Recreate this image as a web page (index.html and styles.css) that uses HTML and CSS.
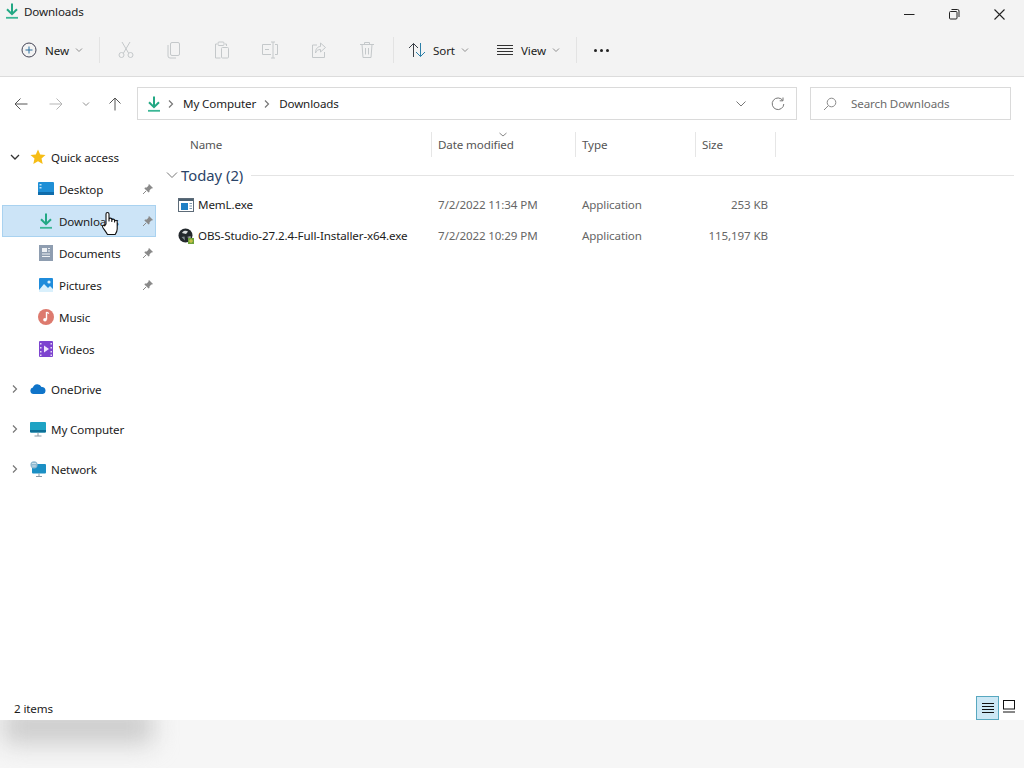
FILE: index.html
```html
<!DOCTYPE html>
<html lang="en">
<head>
<meta charset="utf-8">
<title>Downloads</title>
<link rel="stylesheet" href="styles.css">
</head>
<body>
<svg class="defs" width="0" height="0">
  <symbol id="dl" viewBox="0 0 16 16"><path d="M8 .5v10M3 6.200 8 11.200l5-5" fill="none" stroke="#22a884" stroke-width="2"/><path d="M2 14.800h12" stroke="#3ab795" stroke-width="1.800"/></symbol>
  <symbol id="pin" viewBox="0 0 12 12"><path d="M7 1l4 4-1 .6-.6-.2L7.600 7.200 7.400 9 6.600 9.600 2.400 5.400 3 4.600l1.800-.2L6.600 2.600 6.400 2z" fill="#8a8a8a"/><path d="M4 8l-3 3" stroke="#8a8a8a"/></symbol>
  <symbol id="chev" viewBox="0 0 8 8"><path d="M1 2.500l3 3 3-3" fill="none" stroke="#8f8f8f"/></symbol>
  <symbol id="right" viewBox="0 0 10 10"><path d="M3 1.500 6.500 5 3 8.500" fill="none" stroke="#777" stroke-width="1.200"/></symbol>
</svg>
<div class="app">
  <header class="chrome">
    <div class="titlebar">
      <div class="title">
        <svg width="16" height="16"><use href="#dl"/></svg>
        <span>Downloads</span>
      </div>
      <div class="winctl">
        <svg width="11" height="11" viewBox="0 0 11 11"><path d="M0 5.500h10.500" stroke="#222"/></svg>
        <svg width="11" height="11" viewBox="0 0 11 11"><rect x=".5" y="2.500" width="7.500" height="7.500" rx="1" fill="none" stroke="#222"/><path d="M2.500 .5h6a1.500 1.500 0 0 1 1.500 1.500v6" fill="none" stroke="#222"/></svg>
        <svg width="11" height="11" viewBox="0 0 11 11"><path d="M.5.500l10 10M10.500.500l-10 10" stroke="#222" stroke-width="1.100"/></svg>
      </div>
    </div>
    <div class="toolbar">
      <div class="tb-new">
        <svg width="16" height="16" viewBox="0 0 16 16"><circle cx="8" cy="8" r="7" fill="none" stroke="#445"/><path d="M8 4.500v7M4.500 8h7" stroke="#2b6f9e"/></svg>
        <span>New</span>
        <svg class="ch" width="8" height="8"><use href="#chev"/></svg>
      </div>
      <div class="sep"></div>
      <div class="tb-icons">
        <svg width="16" height="18" viewBox="0 0 16 18"><g fill="none" stroke="#c4c8ca"><path d="M4 1l6.500 11M12 1 5.500 12"/><circle cx="3.500" cy="14" r="2.500"/><circle cx="12.500" cy="14" r="2.500"/></g></svg>
        <svg width="16" height="18" viewBox="0 0 16 18"><g fill="none" stroke="#c4c8ca"><rect x="4.500" y="1.500" width="9" height="13" rx="1.500"/><path d="M2 4v11a2 2 0 0 0 2 2h6"/></g></svg>
        <svg width="16" height="18" viewBox="0 0 16 18"><g fill="none" stroke="#c4c8ca"><path d="M3 3H1.500v14h5M11 3h1.500v2"/><rect x="4" y="1" width="6" height="3.500" rx="1"/><rect x="7.500" y="6.500" width="7" height="10.500" rx="1"/></g></svg>
        <svg width="18" height="18" viewBox="0 0 18 18"><g fill="none" stroke="#c4c8ca"><path d="M10 3.500H1.500v10H10M14 3.500h2.500v10H14"/><path d="M12 1v16M10 1h4M10 17h4M4 8.500h4"/></g></svg>
        <svg width="16" height="18" viewBox="0 0 16 18"><g fill="none" stroke="#c4c8ca"><path d="M6 4H1.500v12.500h12V11"/><path d="M9.500 2l5 4.500-5 4.500V8.500C7 8.500 5.500 9.500 4.500 12c0-4 2-6.500 5-6.500z"/></g></svg>
        <svg width="16" height="18" viewBox="0 0 16 18"><g fill="none" stroke="#c4c8ca"><path d="M1 3.500h14M5.500 3.500V1.500h5v2M3 3.500l1 13h8l1-13M6.500 7v6.500M9.500 7v6.500"/></g></svg>
      </div>
      <div class="sep"></div>
      <div class="tb-btn tb-sort">
        <svg width="18" height="16" viewBox="0 0 18 16"><path d="M5.500 15V1.500M1 6l4.500-4.500L10 6" fill="none" stroke="#3a3f46"/><path d="M12.500 1v13.500M8 10l4.500 4.500L17 10" fill="none" stroke="#2b7fa8"/></svg>
        <span>Sort</span>
        <svg class="ch" width="8" height="8"><use href="#chev"/></svg>
      </div>
      <div class="tb-btn tb-view">
        <svg width="16" height="12" viewBox="0 0 16 12"><path d="M0 1.500h16M0 4.500h16M0 7.500h16M0 10.500h16" stroke="#333"/></svg>
        <span>View</span>
        <svg class="ch" width="8" height="8"><use href="#chev"/></svg>
      </div>
      <div class="sep"></div>
      <div class="dots"><i></i><i></i><i></i></div>
    </div>
  </header>

  <nav class="addrrow">
    <div class="navs">
      <svg class="n-back" width="14" height="14" viewBox="0 0 14 14"><path d="M13.500 7H1M6.500 1.500 1 7l5.500 5.500" fill="none" stroke="#555"/></svg>
      <svg class="n-fwd" width="14" height="14" viewBox="0 0 14 14"><path d="M.5 7H13M7.500 1.500 13 7l-5.500 5.500" fill="none" stroke="#b5b5b5"/></svg>
      <svg class="n-down" width="8" height="8"><use href="#chev"/></svg>
      <svg class="n-up" width="14" height="14" viewBox="0 0 14 14"><path d="M7 13.500V1M1.500 6.500 7 1l5.500 5.500" fill="none" stroke="#555"/></svg>
    </div>
    <div class="addr">
      <svg width="16" height="16"><use href="#dl"/></svg>
      <svg class="crumb-ch" width="10" height="10"><use href="#right"/></svg>
      <span>My Computer</span>
      <svg class="crumb-ch2" width="10" height="10"><use href="#right"/></svg>
      <span>Downloads</span>
      <svg class="addr-down" width="12" height="8" viewBox="0 0 12 8"><path d="M1.500 1.500 6 6l4.500-4.500" fill="none" stroke="#777"/></svg>
      <svg class="addr-ref" width="14" height="14" viewBox="0 0 14 14"><path d="M11.800 3.500A5.800 5.800 0 1 0 12.800 7" fill="none" stroke="#777"/><path d="M12 .5v3.300H8.700" fill="none" stroke="#777"/></svg>
    </div>
    <div class="search">
      <svg width="14" height="14" viewBox="0 0 14 14"><circle cx="8.500" cy="5.500" r="4.300" fill="none" stroke="#8a8a8a"/><path d="M5.300 8.700 1 13" stroke="#8a8a8a"/></svg>
      <span>Search Downloads</span>
    </div>
  </nav>

  <div class="body">
    <aside class="side">
      <div class="row top">
        <svg class="exp" width="10" height="10" viewBox="0 0 10 10"><path d="M1 3l4 4 4-4" fill="none" stroke="#333" stroke-width="1.300"/></svg>
        <svg class="ic" width="16" height="16" viewBox="0 0 16 16"><path d="M8 .5l2.200 5 5.300.5-4 3.600 1.200 5.400L8 12.300 3.300 15l1.200-5.400-4-3.600 5.300-.5z" fill="#f6bd16"/></svg>
        <span>Quick access</span>
      </div>
      <div class="row sub">
        <svg class="ic" width="16" height="14" viewBox="0 0 16 14"><rect width="16" height="13" rx="1" fill="#1f8fd6"/><rect y="10" width="16" height="3" fill="#0f6cab"/><path d="M1.500 2h2v1.500h-2zM1.500 5h2v1.500h-2z" fill="#bfe6fb"/></svg>
        <span class="lbl">Desktop</span>
        <svg class="pin" width="12" height="12"><use href="#pin"/></svg>
      </div>
      <div class="row sub sel">
        <svg class="ic" width="16" height="16"><use href="#dl"/></svg>
        <span class="lbl">Downloads</span>
        <svg class="pin" width="12" height="12"><use href="#pin"/></svg>
      </div>
      <div class="row sub">
        <svg class="ic" width="14" height="16" viewBox="0 0 14 16"><rect width="14" height="16" fill="#8e9db0"/><rect x="3" y="3" width="5" height="4" fill="#eef1f4"/><path d="M9 3.500h2M9 6h2M3 9h8M3 11.500h8" stroke="#eef1f4"/></svg>
        <span class="lbl">Documents</span>
        <svg class="pin" width="12" height="12"><use href="#pin"/></svg>
      </div>
      <div class="row sub">
        <svg class="ic" width="14" height="14" viewBox="0 0 14 14"><rect width="14" height="14" rx="1" fill="#1f8cdb"/><path d="M0 12l5-6 4 4 2-2 3 3v3H0z" fill="#d9f0fc"/><circle cx="10" cy="4" r="1.600" fill="#d9f0fc"/></svg>
        <span class="lbl">Pictures</span>
        <svg class="pin" width="12" height="12"><use href="#pin"/></svg>
      </div>
      <div class="row sub">
        <svg class="ic" width="16" height="16" viewBox="0 0 16 16"><circle cx="8" cy="8" r="8" fill="#dd7a6e"/><path d="M8.500 3v7.500" stroke="#fff" stroke-width="1.400"/><circle cx="7" cy="10.800" r="1.800" fill="#fff"/><path d="M8.500 3l2.500 1.500" stroke="#fff" stroke-width="1.200"/></svg>
        <span class="lbl">Music</span>
      </div>
      <div class="row sub">
        <svg class="ic" width="14" height="16" viewBox="0 0 14 16"><rect width="14" height="16" rx="1" fill="#7d44cf"/><path d="M1 2h1.500v1.500H1zM1 6h1.500v1.500H1zM1 10h1.500v1.500H1zM1 13.500h1.500V15H1zM11.500 2H13v1.500h-1.500zM11.500 6H13v1.500h-1.500zM11.500 10H13v1.500h-1.500zM11.500 13.500H13V15h-1.500z" fill="#e4d6f7"/><path d="M5 4.500 10 8l-5 3.500z" fill="#efe6fb"/></svg>
        <span class="lbl">Videos</span>
      </div>
      <div class="row top gap">
        <svg class="exp" width="10" height="10"><use href="#right"/></svg>
        <svg class="ic" width="16" height="10" viewBox="0 0 16 10"><path d="M3.500 10a3.300 3.300 0 0 1-.6-6.500A4.600 4.600 0 0 1 11.500 3 3.600 3.600 0 0 1 13 10z" fill="#0f74c9"/></svg>
        <span>OneDrive</span>
      </div>
      <div class="row top gap">
        <svg class="exp" width="10" height="10"><use href="#right"/></svg>
        <svg class="ic" width="16" height="15" viewBox="0 0 16 15"><rect width="16" height="10.500" rx="1" fill="#1ea3c4"/><path d="M0 8h16v1.500a1 1 0 0 1-1 1H1a1 1 0 0 1-1-1z" fill="#0d6f96"/><path d="M8 10.500V14M4.500 14h7" stroke="#8a9aa5"/></svg>
        <span>My Computer</span>
      </div>
      <div class="row top gap">
        <svg class="exp" width="10" height="10"><use href="#right"/></svg>
        <svg class="ic" width="16" height="16" viewBox="0 0 16 16"><rect x="2" y="3" width="14" height="9.500" rx="1" fill="#1b8fc4"/><circle cx="4" cy="3.800" r="3.600" fill="#8fb8cf"/><path d="M2 2.500h4M2.200 5h3.600" stroke="#e8f2f7" stroke-width=".7"/><path d="M9 12.500V15.500M6 15.500h6" stroke="#8a9aa5"/></svg>
        <span>Network</span>
      </div>
    </aside>

    <main class="list">
      <div class="cols">
        <div class="col c-name">Name</div>
        <div class="col c-date">Date modified<svg class="sortmark" width="8" height="5" viewBox="0 0 8 5"><path d="M.5 1 4 4l3.500-3" fill="none" stroke="#888"/></svg></div>
        <div class="col c-type">Type</div>
        <div class="col c-size">Size</div>
      </div>
      <div class="group">
        <svg width="12" height="8" viewBox="0 0 12 8"><path d="M1 1.500 6 6.500l5-5" fill="none" stroke="#777"/></svg>
        <span>Today (2)</span>
        <div class="rule"></div>
      </div>
      <div class="file">
        <div class="fname">
          <svg width="16" height="14" viewBox="0 0 16 14"><rect x=".5" y=".5" width="15" height="13" fill="#fff" stroke="#5d6b78"/><rect x="1" y="1" width="14" height="2" fill="#4d6272"/><rect x="3" y="5" width="7" height="7" fill="#1f7fc4"/><path d="M11.500 5.500H14M11.500 8H14M11.500 10.500H14" stroke="#7d98ad"/></svg>
          <span>MemL.exe</span>
        </div>
        <div>7/2/2022 11:34 PM</div>
        <div>Application</div>
        <div class="fsize">253 KB</div>
      </div>
      <div class="file">
        <div class="fname">
          <svg width="16" height="16" viewBox="0 0 16 16"><circle cx="7.500" cy="7.500" r="7" fill="#23282c"/><path d="M4 5a4 4 0 0 1 6-1.500L8 6z" fill="#d8dcdc"/><path d="M3.500 9l3-.5.500 4z" fill="#7f8a8c"/><path d="M9 9l3.500-1 .5 3z" fill="#9a9f9f"/><rect x="10" y="10" width="6" height="6" fill="#6ea23a"/><path d="M11 13h4M13 11v4" stroke="#e3c94a"/></svg>
          <span>OBS-Studio-27.2.4-Full-Installer-x64.exe</span>
        </div>
        <div>7/2/2022 10:29 PM</div>
        <div>Application</div>
        <div class="fsize">115,197 KB</div>
      </div>
    </main>
  </div>

  <div class="status">
    <span>2 items</span>
    <div class="views">
      <div class="v-on"><svg width="12" height="10" viewBox="0 0 12 10"><path d="M0 .5h12M0 3.500h12M0 6.500h12M0 9.500h12" stroke="#111"/></svg></div>
      <svg class="v-off" width="12" height="13" viewBox="0 0 12 13"><rect x=".5" y=".5" width="11" height="8.500" fill="none" stroke="#111"/><path d="M0 12h12" stroke="#111"/></svg>
    </div>
  </div>
  <div class="under"><div class="shade"></div></div>

  <svg class="hand" width="18" height="26" viewBox="0 0 18 26"><path d="M5 13V3a1.500 1.500 0 0 1 3 0v7-1.500a1.400 1.400 0 0 1 2.800 0V10.500 9.500a1.400 1.400 0 0 1 2.800 0v1.500-.5a1.300 1.300 0 0 1 2.600 0V18c0 2.500-1 4-2 5.500H6.500C5 21 3.500 19 1.800 16.500c-1-1.500.8-3 2-1.700z" fill="#fff" stroke="#111" stroke-width="1.100" stroke-linejoin="round"/></svg>
</div>
</body>
</html>
```
FILE: styles.css
```css
* { box-sizing: border-box; }
html, body { margin: 0; height: 100%; }
body { font-family: "Noto Sans", "Liberation Sans", sans-serif; font-size: 11.6px; letter-spacing: -0.12px; color: #1c1c1c; background: #fff; overflow: hidden; }
.defs { position: absolute; }
.app { position: relative; width: 1024px; height: 768px; display: flex; flex-direction: column; }

.chrome { height: 77px; background: #f3f3f3; border-bottom: 1px solid #dcdcdc; }
.titlebar { height: 28px; display: flex; justify-content: space-between; }
.title { display: flex; align-items: center; gap: 4px; padding: 0 0 6px 4px; color: #222; }
.winctl { display: flex; gap: 34px; padding: 9px 19px 0 0; }
.toolbar { height: 44px; display: flex; align-items: center; }
.tb-new { width: 88px; margin-left: 11px; padding-left: 10px; display: flex; align-items: center; }
.tb-new span { margin-left: 8px; }
.ch { margin-left: 6px; }
.sep { width: 1px; height: 26px; background: #e3e3e3; }
.tb-icons { width: 293px; padding: 0 18px; display: flex; align-items: center; justify-content: space-between; }
.tb-btn { display: flex; align-items: center; }
.tb-sort { width: 103px; padding-left: 14px; }
.tb-sort span { margin-left: 7px; }
.tb-view { width: 79px; }
.tb-view span { margin-left: 8px; }
.dots { display: flex; gap: 3px; padding-left: 17px; }
.dots i { width: 3px; height: 3px; border-radius: 50%; background: #222; }

.addrrow { height: 53px; display: flex; align-items: flex-start; padding-top: 10px; }
.navs { width: 137px; height: 33px; display: flex; align-items: center; padding-left: 14px; }
.n-fwd { margin-left: 21px; }
.n-down { margin-left: 19px; }
.n-up { margin-left: 18px; }
.addr { width: 660px; height: 33px; border: 1px solid #dadada; display: flex; align-items: center; padding-left: 8px; }
.crumb-ch { margin-left: 4px; margin-right: 7px; }
.crumb-ch2 { margin-left: 6px; margin-right: 7px; }
.addr-down { margin-left: 396px; }
.addr-ref { margin-left: 24px; }
.search { width: 201px; height: 33px; margin-left: 13px; border: 1px solid #dadada; display: flex; align-items: center; padding-left: 12px; gap: 14px; color: #6b6b6b; }

.body { flex: 1; min-height: 0; display: flex; }
.side { width: 157px; padding-top: 11px; }
.row { height: 32px; display: flex; align-items: center; position: relative; }
.row.gap { margin-top: 8px; }
.top { padding-left: 10px; }
.top .exp { margin-right: 10px; }
.top .ic { margin-right: 5px; }
.sub { padding-left: 38px; }
.sub .ic { flex: none; margin-right: 5px; }
.sub svg[width="14"].ic { margin-left: 1px; margin-right: 6px; }
.pin { position: absolute; right: 3px; top: 10px; }
.sel { width: 154px; margin-left: 2px; padding-left: 35px; background: #cce4f7; border: 1px solid #a9d2f0; }
.sel .pin { right: 1px; top: 9px; }

.list { flex: 1; min-width: 0; padding-right: 10px; }
.cols { height: 27px; display: grid; grid-template-columns: 275px 144px 120px 80px; color: #555; }
.col { position: relative; display: flex; align-items: center; padding-left: 6px; border-right: 1px solid #e6e6e6; margin-top: 2px; }
.c-name { padding-left: 33px; }
.sortmark { position: absolute; left: 67px; top: 0; }
.group { height: 29px; margin-top: 3px; display: flex; align-items: center; padding-left: 9px; color: #2a4468; font-size: 14.8px; font-weight: 400; letter-spacing: 0; }
.group span { margin-left: 3px; }
.rule { flex: 1; height: 1px; background: #e4e4e4; margin: 2px 0 0 8px; }
.file { height: 31px; display: grid; grid-template-columns: 275px 144px 100px 92px; align-items: center; color: #666; }
.file > div:nth-child(2), .file > div:nth-child(3) { padding-left: 6px; }
.fname { display: flex; align-items: center; gap: 4px; padding-left: 21px; color: #1c1c1c; white-space: nowrap; }
.fsize { text-align: right; }

.status { height: 30px; background: #fff; display: flex; justify-content: space-between; align-items: flex-end; padding-left: 14px; }
.status > span { padding-bottom: 4px; }
.views { display: flex; align-items: center; padding-right: 9px; }
.v-on { width: 23px; height: 24px; background: #cde8f5; border: 1px solid #58a8c0; display: flex; align-items: center; justify-content: center; }
.v-off { margin-left: 4px; margin-bottom: 3px; }
.under { height: 48px; background: #f6f6f6; overflow: hidden; }
.shade { width: 150px; height: 36px; margin: -12px 0 0 3px; background: #cccccc; filter: blur(12px); }

.hand { position: absolute; left: 101px; top: 211px; }
```
